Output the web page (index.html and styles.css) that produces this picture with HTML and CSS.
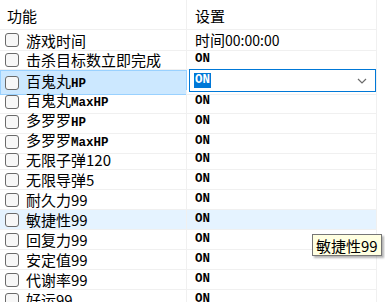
FILE: index.html
```html
<!DOCTYPE html>
<html>
<head>
<meta charset="utf-8">
<link rel="stylesheet" href="styles.css">
</head>
<body>
<div class="grid">
  <div class="row head">
    <div class="cell c1"><span class="htext">功能</span></div>
    <div class="cell c2"><span class="htext">设置</span></div>
  </div>
  <div class="row">
    <div class="cell c1"><span class="cb"></span><span>游戏时间</span></div>
    <div class="cell c2"><span>时间<span class="digits">00:00:00</span></span></div>
  </div>
  <div class="row">
    <div class="cell c1"><span class="cb"></span><span>击杀目标数立即完成</span></div>
    <div class="cell c2"><span class="mono">ON</span></div>
  </div>
  <div class="row sel">
    <div class="cell c1"><span class="cb"></span><span>百鬼丸<span class="mono">HP</span></span></div>
    <div class="cell c2">
      <div class="combo">
        <span class="mono hl">ON</span>
        <svg class="chev" width="10" height="6" viewBox="0 0 10 6"><path d="M1 1 L5 5 L9 1" fill="none" stroke="#6b6b6b" stroke-width="1.2"/></svg>
      </div>
    </div>
  </div>
  <div class="row">
    <div class="cell c1"><span class="cb"></span><span>百鬼丸<span class="mono">MaxHP</span></span></div>
    <div class="cell c2"><span class="mono">ON</span></div>
  </div>
  <div class="row">
    <div class="cell c1"><span class="cb"></span><span>多罗罗<span class="mono">HP</span></span></div>
    <div class="cell c2"><span class="mono">ON</span></div>
  </div>
  <div class="row">
    <div class="cell c1"><span class="cb"></span><span>多罗罗<span class="mono">MaxHP</span></span></div>
    <div class="cell c2"><span class="mono">ON</span></div>
  </div>
  <div class="row">
    <div class="cell c1"><span class="cb"></span><span>无限子弹120</span></div>
    <div class="cell c2"><span class="mono">ON</span></div>
  </div>
  <div class="row">
    <div class="cell c1"><span class="cb"></span><span>无限导弹5</span></div>
    <div class="cell c2"><span class="mono">ON</span></div>
  </div>
  <div class="row">
    <div class="cell c1"><span class="cb"></span><span>耐久力99</span></div>
    <div class="cell c2"><span class="mono">ON</span></div>
  </div>
  <div class="row hover">
    <div class="cell c1"><span class="cb"></span><span>敏捷性99</span></div>
    <div class="cell c2"><span class="mono">ON</span></div>
  </div>
  <div class="row">
    <div class="cell c1"><span class="cb"></span><span>回复力99</span></div>
    <div class="cell c2 tipcell"><span class="mono">ON</span><div class="tip">敏捷性99</div></div>
  </div>
  <div class="row">
    <div class="cell c1"><span class="cb"></span><span>安定值99</span></div>
    <div class="cell c2"><span class="mono">ON</span></div>
  </div>
  <div class="row">
    <div class="cell c1"><span class="cb"></span><span>代谢率99</span></div>
    <div class="cell c2"><span class="mono">ON</span></div>
  </div>
  <div class="row">
    <div class="cell c1"><span class="cb"></span><span>好运99</span></div>
    <div class="cell c2"><span class="mono">ON</span></div>
  </div>
</div>
</body>
</html>
```
FILE: styles.css
```css
html, body {
  margin: 0;
  padding: 0;
  background: #ffffff;
  overflow: hidden;
}
body {
  font-family: "Noto Sans CJK SC", "Noto Sans", sans-serif;
  font-size: 15px;
  color: #000;
  width: 385px;
  height: 302px;
}
.grid {
  display: flex;
  flex-direction: column;
}
.row {
  display: grid;
  grid-template-columns: 187px 190px;
  height: 20px;
}
.row.head {
  height: 30px;
}
.cell {
  display: flex;
  align-items: center;
  box-sizing: border-box;
  border-bottom: 1px solid #f0f0f0;
  border-right: 1px solid #f0f0f0;
  line-height: 19px;
  white-space: nowrap;
  overflow: visible;
  position: relative;
}
.c1 {
  padding-left: 5px;
}
.c2 {
  padding-left: 8px;
}
.head .c1 {
  padding-left: 7px;
}
.head .cell {
  padding-top: 2px;
}
.digits {
  font-size: 14px;
}
.cb {
  width: 12px;
  height: 12px;
  border: 1px solid #6a6a6a;
  border-radius: 3px;
  background: #f7f7f7;
  margin-right: 7px;
  flex: none;
}
.mono {
  font-family: "Liberation Mono", "Courier New", monospace;
  font-size: 12.5px;
  font-weight: bold;
  letter-spacing: 0;
}
.hover .cell {
  background: #e5f3ff;
}
.sel .c1 {
  background: #cce8ff;
  border: 1px solid #99d1ff;
  padding-left: 4px;
}
.combo {
  position: absolute;
  left: 2px;
  top: -1px;
  width: 187px;
  height: 23px;
  box-sizing: border-box;
  border: 1px solid #0078d7;
  background: #fff;
  display: flex;
  align-items: center;
  padding-left: 4px;
  z-index: 2;
}
.hl {
  background: #0078d7;
  color: #fff;
  line-height: 15px;
  padding: 0 1px;
}
.chev {
  margin-left: auto;
  margin-right: 8px;
}
.tip {
  position: absolute;
  left: 125px;
  top: 4px;
  height: 22px;
  box-sizing: border-box;
  padding: 0 3px;
  border: 1px solid #767676;
  background: #ffffe1;
  box-shadow: 2px 2px 2px rgba(0,0,0,0.3);
  display: flex;
  align-items: center;
  font-size: 15px;
  z-index: 3;
}
```
